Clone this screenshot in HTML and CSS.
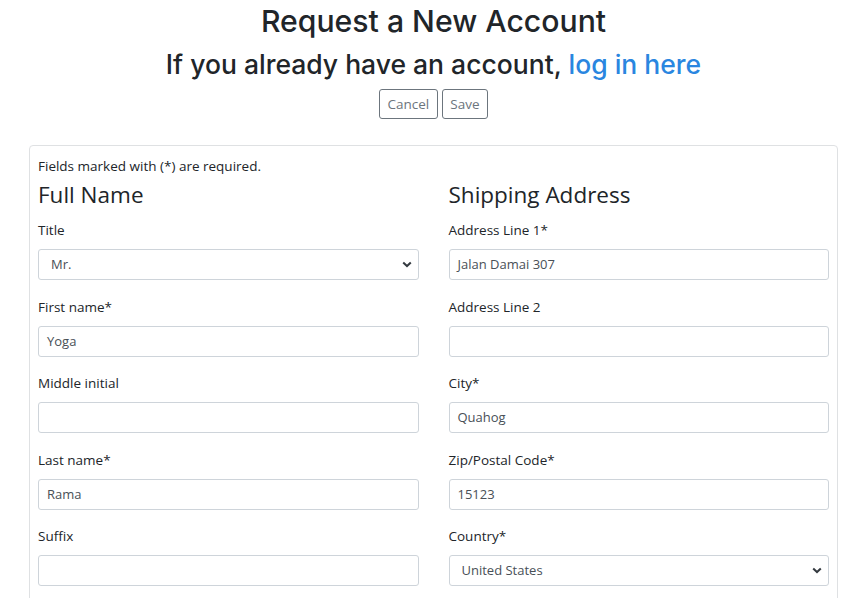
FILE: index.html
```html
<!DOCTYPE html>
<html lang="en">
<head>
<meta charset="utf-8">
<title>Request a New Account</title>
<link rel="stylesheet" href="styles.css">
</head>
<body>
<header class="page-head">
  <h1 class="title">Request a New Account</h1>
  <h2 class="subtitle">If you already have an account, <a href="#" class="link">log in here</a></h2>
  <div class="actions">
    <button class="btn">Cancel</button>
    <button class="btn">Save</button>
  </div>
</header>
<main class="card">
  <p class="note">Fields marked with (*) are required.</p>
  <div class="cols">
    <section class="col">
      <h3 class="section-title">Full Name</h3>
      <div class="field">
        <label class="label">Title</label>
        <div class="select"><span class="select-value">Mr.</span><svg class="chev" width="10" height="7" viewBox="0 0 10 7"><path d="M1.2 1.4 L5 5 L8.8 1.4" fill="none" stroke="#343a40" stroke-width="2"/></svg></div>
      </div>
      <div class="field">
        <label class="label">First name*</label>
        <div class="input">Yoga</div>
      </div>
      <div class="field">
        <label class="label">Middle initial</label>
        <div class="input"></div>
      </div>
      <div class="field">
        <label class="label">Last name*</label>
        <div class="input">Rama</div>
      </div>
      <div class="field">
        <label class="label">Suffix</label>
        <div class="input"></div>
      </div>
    </section>
    <section class="col">
      <h3 class="section-title">Shipping Address</h3>
      <div class="field">
        <label class="label">Address Line 1*</label>
        <div class="input">Jalan Damai 307</div>
      </div>
      <div class="field">
        <label class="label">Address Line 2</label>
        <div class="input"></div>
      </div>
      <div class="field">
        <label class="label">City*</label>
        <div class="input">Quahog</div>
      </div>
      <div class="field">
        <label class="label">Zip/Postal Code*</label>
        <div class="input">15123</div>
      </div>
      <div class="field">
        <label class="label">Country*</label>
        <div class="select"><span class="select-value">United States</span><svg class="chev" width="10" height="7" viewBox="0 0 10 7"><path d="M1.2 1.4 L5 5 L8.8 1.4" fill="none" stroke="#343a40" stroke-width="2"/></svg></div>
      </div>
    </section>
  </div>
</main>
</body>
</html>
```
FILE: styles.css
```css
html, body {
  margin: 0;
  padding: 0;
  background: #fff;
  overflow: hidden;
}
body {
  font-family: "Open Sans", "Noto Sans", "Liberation Sans", sans-serif;
  color: #212529;
  height: 598px;
}
.page-head {
  text-align: center;
  padding: 2px 0 0 8px;
}
.title {
  margin: 0;
  font-family: "Inter", "Open Sans", sans-serif;
  font-size: 30.2px;
  font-weight: 500;
  line-height: 38px;
}
.subtitle {
  margin: 7px 0 0;
  font-family: "Inter", "Open Sans", sans-serif;
  font-size: 26.5px;
  font-weight: 500;
  line-height: 34px;
}
.link {
  color: #2a86e0;
  text-decoration: none;
}
.actions {
  display: flex;
  justify-content: center;
  gap: 4px;
  margin-top: 8px;
}
.btn {
  height: 30px;
  padding: 0 7.5px;
  border: 1px solid #6c757d;
  border-radius: 3px;
  background: #fff;
  color: #6c757d;
  font-family: inherit;
  font-size: 13.5px;
}
.card {
  box-sizing: border-box;
  margin: 26px 21px 0 29px;
  border: 1px solid #dfe1e3;
  border-radius: 4px;
  padding: 11px 8px 0;
  height: 460px;
}
.note {
  margin: 0;
  font-size: 13.5px;
  line-height: 18px;
}
.cols {
  display: grid;
  grid-template-columns: 1fr 1fr;
  column-gap: 30px;
}
.section-title {
  margin: 5px 0 0;
  font-size: 22.5px;
  font-weight: 400;
  line-height: 30px;
}
.field {
  margin-top: 11px;
}
.field + .field {
  margin-top: 17.5px;
}
.label {
  display: block;
  font-size: 13.5px;
  line-height: 18px;
  margin-bottom: 10px;
}
.input, .select {
  box-sizing: border-box;
  height: 31px;
  border: 1px solid #ced4da;
  border-radius: 3px;
  font-size: 13px;
  line-height: 29px;
  color: #495057;
  padding: 0 8px;
}
.select {
  display: flex;
  align-items: center;
  justify-content: space-between;
  padding: 0 6px 0 12px;
}
.chev {
  display: block;
}
```
